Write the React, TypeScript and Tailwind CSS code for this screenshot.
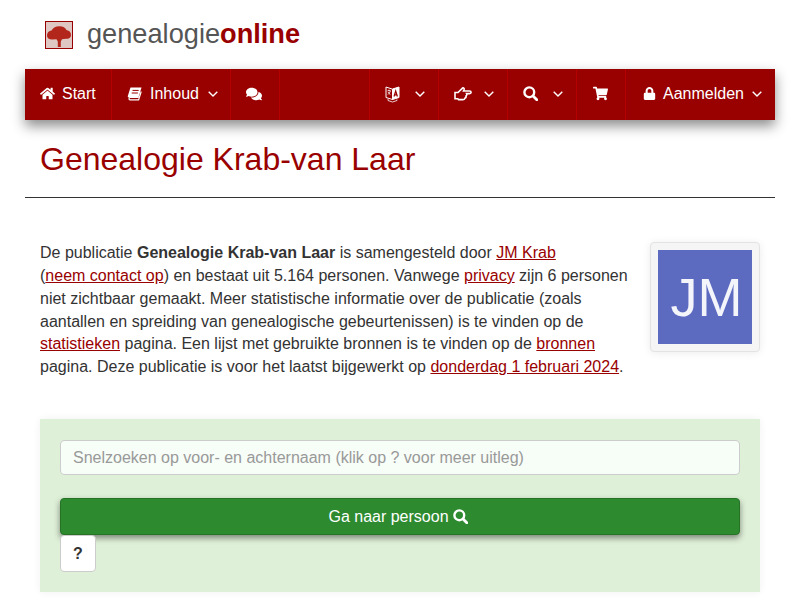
import { FaComments, FaHome, FaLock, FaShoppingCart } from "react-icons/fa";
import type { ReactNode } from "react";

const Chevron = () => (
    <svg width="10" height="6" viewBox="0 0 10 6" fill="none" stroke="currentColor" strokeWidth="1.4">
        <path d="M0.7 0.7 5 5 9.3 0.7" />
    </svg>
);

const SearchIcon = () => (
    <svg width="15" height="15" viewBox="0 0 15 15" fill="none" stroke="currentColor">
        <circle cx="6.3" cy="6.3" r="4.9" strokeWidth="2.4" />
        <path d="M10 10l3.8 3.8" strokeWidth="2.8" strokeLinecap="round" />
    </svg>
);

const BookIcon = () => (
    <svg width="15" height="14" viewBox="0 0 15 14">
        <path d="M3.5.5H14.5L11.5 10.5H3C1.5 10.5.4 10.5.8 9z" fill="white" />
        <path d="M11.5 10.5H3C1.7 10.5 1.7 12.9 3 12.9H11.6L14.2 4.5" fill="none" stroke="white" strokeWidth="1.2" />
        <path d="M5.5 3.4h6.2M4.7 6h6.2" fill="none" stroke="#990000" strokeWidth="1" />
    </svg>
);

const LanguageIcon = () => (
    <svg width="15" height="18" viewBox="0 0 15 18" fill="none" stroke="white">
        <path d="M1 2 7.500 4.200V14.500L1 12.500z" strokeWidth="1" />
        <path d="M7.500 4 14 2V12.500L7.500 14.500z" fill="white" strokeWidth="1" />
        <path d="M9 11.500 10.700 6 12.400 11.500M9.600 9.800h2.300" stroke="#990000" strokeWidth="1.2" />
        <path d="M2.600 5.600h3M4 4.600v1M3 9.500c1.200-.8 2-2 2.400-3.600M3 6.800c.4 1.200 1.200 2.200 2.400 2.800" strokeWidth=".8" />
        <path d="M3 14v1.500L7.500 17 12 15.500V14.500" strokeWidth=".8" />
    </svg>
);

const HandIcon = () => (
    <svg width="18" height="15" viewBox="0 0 18 15" fill="none" stroke="white" strokeWidth="1.6">
        <path d="M1 6.500H4L8 2.600C9 1.300 10.600 2 10.100 3.600L9.500 5H15.600C17.600 5 17.600 7.600 15.600 7.600H12.600C13.200 8.700 12.700 9.600 12 9.900 12.300 11 11.700 11.800 11 12 10.900 13 10.200 13.600 9 13.600H4.500L3.800 12.800H1z" />
    </svg>
);

const NavItem = ({ className, children }: { className: string; children?: ReactNode }) => (
    <div className={`flex h-full items-center border-r border-[#b50000] pb-[2px] last:border-r-0 ${className}`}>
        {children}
    </div>
);

const TextLink = ({ children }: { children: ReactNode }) => (
    <a className="text-[#990000] underline">{children}</a>
);

const Tree = () => (
    <svg width="28" height="28" viewBox="0 0 28 28" className="shrink-0">
        <rect x="0.5" y="0.5" width="27" height="27" fill="#dfc8c4" stroke="#990000" />
        <path d="M2 14.500C2 11.500 4 10 6.500 9.500 8 6.500 11.500 5 14.500 5.200 18 5.200 20.500 6.800 21.500 9 24.500 9.500 26.300 11.500 26 14.500 25.700 17 23.500 18 21 17.800L17 18.300 15.800 20.500V26H12.800V20.500L11.500 18.300 7 18.500C4 18.500 2 17 2 14.500z" fill="#b3261c" />
    </svg>
);

export default function App() {
    return (
        <div className="h-[600px] w-[800px] overflow-hidden bg-white font-['Liberation_Sans',sans-serif] text-[16px] text-[#333333]">
            <div className="flex h-[69px] items-center pl-[45px]">
                <Tree />
                <p className="mb-[1px] ml-[14px] text-[27.2px] leading-none text-[#555555]">
                    genealogie<span className="font-bold text-[#990000]">online</span>
                </p>
            </div>

            <div className="mx-[25px] flex h-[51px] bg-[#990000] text-white shadow-[0_6px_12px_rgba(0,0,0,0.45)]">
                <NavItem className="w-[87px] pl-[15px]">
                    <FaHome className="mr-[7px] text-[15px]" /> Start
                </NavItem>
                <NavItem className="w-[119px] pl-[15px]">
                    <span className="mr-[8px]"><BookIcon /></span> Inhoud <span className="ml-[9px]"><Chevron /></span>
                </NavItem>
                <NavItem className="w-[49px] pl-[15px]">
                    <FaComments className="text-[16px]" />
                </NavItem>
                <NavItem className="w-[90px]" />
                <NavItem className="w-[69px] pl-[15px]">
                    <LanguageIcon /> <span className="ml-[15px]"><Chevron /></span>
                </NavItem>
                <NavItem className="w-[69px] pl-[15px]">
                    <HandIcon /> <span className="ml-[12px]"><Chevron /></span>
                </NavItem>
                <NavItem className="w-[69px] pl-[15px]">
                    <SearchIcon /> <span className="ml-[15px]"><Chevron /></span>
                </NavItem>
                <NavItem className="w-[49px] pl-[16px]">
                    <FaShoppingCart className="text-[15px]" />
                </NavItem>
                <NavItem className="w-[149px] pl-[17px]">
                    <FaLock className="mr-[7px] text-[13px]" /> Aanmelden <span className="ml-[8px]"><Chevron /></span>
                </NavItem>
            </div>

            <div className="mx-[25px] h-[78px] border-b border-[#333333] px-[15px] pt-[21px]">
                <h1 className="text-[32px] leading-[36px] text-[#990000]">Genealogie Krab-van Laar</h1>
            </div>

            <div className="mx-[40px] mt-[44px] flex justify-between">
                <p className="w-[590px] leading-[22.857px]">
                    De publicatie <b>Genealogie Krab-van Laar</b> is samengesteld door <TextLink>JM Krab</TextLink> <span className="whitespace-nowrap">(<TextLink>neem contact op</TextLink>)</span> en bestaat uit 5.164 personen. Vanwege <TextLink>privacy</TextLink> zijn 6 personen niet zichtbaar gemaakt. Meer statistische informatie over de publicatie (zoals aantallen en spreiding van genealogische gebeurtenissen) is te vinden op de <TextLink>statistieken</TextLink> pagina. Een lijst met gebruikte bronnen is te vinden op de <TextLink>bronnen</TextLink> pagina. Deze publicatie is voor het laatst bijgewerkt op <TextLink>donderdag 1 februari 2024</TextLink>.
                </p>
                <div className="flex h-[110px] w-[110px] items-start rounded-[4px] border border-[#e3e3e3] bg-[#f5f5f5] p-[7px] shadow-[0_1px_8px_rgba(0,0,0,0.08)]">
                    <div className="flex h-[94px] w-[94px] items-center justify-center bg-[#5c6bc0] pl-[3px] text-[54px] text-[#f4f5fb]">JM</div>
                </div>
            </div>

            <div className="mx-[40px] mt-[40px] h-[173px] bg-[#dff0d8] px-[20px] pt-[21px] shadow-[0_0_8px_rgba(0,0,0,0.06)]">
                <div className="flex h-[35px] items-center rounded-[4px] border border-[#cccccc] bg-[#f7fdf7] px-[12px] text-[#999999]">
                    Snelzoeken op voor- en achternaam (klik op ? voor meer uitleg)
                </div>
                <div className="mt-[23px] flex h-[37px] items-center justify-center gap-[4px] rounded-[4px] border border-[#267326] bg-[#2d8a2f] pr-[4px] text-white shadow-[0_3px_6px_rgba(0,0,0,0.45)]">
                    Ga naar persoon <SearchIcon />
                </div>
                <div className="flex h-[37px] w-[36px] items-center justify-center rounded-[4px] border border-[#cccccc] bg-white font-bold">?</div>
            </div>
        </div>
    );
}
